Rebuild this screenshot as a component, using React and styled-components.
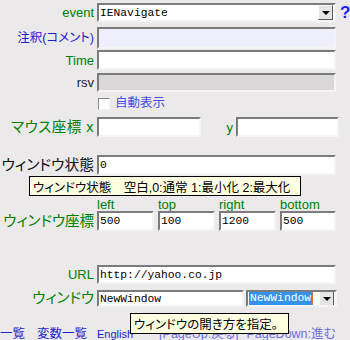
import React from "react";
import styled, { createGlobalStyle } from "styled-components";

const Global = createGlobalStyle`
  html, body { margin: 0; padding: 0; }
  body {
    background: #ebe9ea;
    font-family: "Liberation Sans", "Noto Sans CJK JP", sans-serif;
    font-feature-settings: "palt";
    width: 350px; height: 340px; overflow: hidden;
  }
`;

const Page = styled.div`
  position: relative;
  width: 350px;
  height: 340px;
  padding-top: 3px;
  box-sizing: border-box;
  overflow: hidden;
`;

const Row = styled.div`
  display: flex;
  align-items: center;
  height: ${(p) => p.$h}px;
  margin-top: ${(p) => p.$mt || 0}px;
`;

const Label = styled.div`
  width: 97px;
  flex: none;
  box-sizing: border-box;
  padding-right: 3px;
  text-align: right;
  color: ${(p) => p.$color || "#008000"};
  font-size: ${(p) => p.$size || 13}px;
  line-height: 1;
  white-space: nowrap;
  letter-spacing: ${(p) => p.$ls || 0}px;
`;

const Box = styled.div`
  box-sizing: border-box;
  width: ${(p) => p.$w}px;
  height: 100%;
  flex: none;
  border: 2px solid;
  border-color: #7b7b7b #f4f4f4 #f4f4f4 #7b7b7b;
  background: ${(p) => p.$bg || "#ffffff"};
  font-family: "Liberation Mono", "DejaVu Sans Mono", monospace;
  font-size: 11.3px;
  color: #000;
  display: flex;
  align-items: center;
  padding-left: 1px;
  white-space: nowrap;
  overflow: hidden;
`;

const Select = styled(Box)`
  justify-content: space-between;
  padding-right: 1px;
`;

const ArrowBtn = styled.div`
  box-sizing: border-box;
  width: 15px;
  height: 15px;
  background: #e6e4e4;
  border: 1px solid;
  border-color: #fafafa #5a5a5a #5a5a5a #fafafa;
  display: flex;
  align-items: center;
  justify-content: center;
  &::after {
    content: "";
    border-left: 4px solid transparent;
    border-right: 4px solid transparent;
    border-top: 4px solid #000;
  }
`;

const Help = styled.span`
  margin-left: 4px;
  color: #1a1aff;
  font-family: "Liberation Sans", sans-serif;
  font-weight: bold;
  font-size: 17px;
  line-height: 1;
`;

const CheckRow = styled.div`
  display: flex;
  align-items: center;
  margin-left: 98px;
  margin-top: ${(p) => p.$mt}px;
  height: 13px;
  gap: 5px;
`;

const Check = styled.div`
  box-sizing: border-box;
  width: 12px;
  height: 12px;
  background: #fff;
  border: 1px solid;
  border-color: #8a8a8a #f4f4f4 #f4f4f4 #8a8a8a;
`;

const CheckText = styled.span`
  color: #4a4aee;
  font-size: 12.5px;
  line-height: 1;
`;

const Small = styled.span`
  color: #008000;
  font-size: ${(p) => p.$size || 13}px;
  width: ${(p) => p.$w}px;
  text-align: ${(p) => p.$align || "left"};
  flex: none;
  line-height: 1;
  padding-right: ${(p) => p.$pr || 0}px;
  box-sizing: border-box;
`;

const CoordLabels = styled.div`
  display: flex;
  margin-left: 97px;
  margin-top: ${(p) => p.$mt}px;
  height: 12px;
  align-items: center;
  gap: 4px;
`;

const CoordBoxes = styled.div`
  display: flex;
  gap: 4px;
  height: 100%;
`;

const Tip = styled.div`
  position: absolute;
  left: ${(p) => p.$x}px;
  top: ${(p) => p.$y}px;
  width: ${(p) => p.$w}px;
  height: ${(p) => p.$h}px;
  padding: 0 3px;
  box-sizing: border-box;
  background: #ffffe1;
  border: 1px solid #000;
  font-size: 12.5px;
  color: #000;
  display: flex;
  align-items: center;
  white-space: nowrap;
  overflow: hidden;
  z-index: 2;
`;

const Highlight = styled.span`
  background: #3393ee;
  color: #fff;
  border-right: 1px solid #e0702a;
  padding: 0 1px;
  line-height: 13px;
`;

const Footer = styled.div`
  display: flex;
  align-items: center;
  margin-top: ${(p) => p.$mt}px;
  font-size: 12.5px;
  line-height: 1;
  white-space: nowrap;
`;

const Link = styled.span`
  color: ${(p) => (p.$faint ? "#6e6ede" : "#1d1dd0")};
  margin-left: ${(p) => p.$ml || 0}px;
  font-size: ${(p) => (p.$size ? `${p.$size}px` : "inherit")};
`;

export default function App() {
  return (
    <>
      <Global />
      <Page>
        <Row $h={19}>
          <Label>event</Label>
          <Select $w={239}>
            <span>IENavigate</span>
            <ArrowBtn />
          </Select>
          <Help>?</Help>
        </Row>
        <Row $h={22} $mt={5}>
          <Label $color="#1d1dd0" $size={12.5}>注釈(コメント)</Label>
          <Box $w={239} $bg="#eeeefc" />
        </Row>
        <Row $h={20} $mt={1}>
          <Label>Time</Label>
          <Box $w={239} />
        </Row>
        <Row $h={19} $mt={3}>
          <Label $color="#222">rsv</Label>
          <Box $w={239} $bg="#d9d7d8" />
        </Row>
        <CheckRow $mt={5}>
          <Check />
          <CheckText>自動表示</CheckText>
        </CheckRow>
        <Row $h={20} $mt={7}>
          <Label $size={14.5} $ls={0.5}>マウス座標 x</Label>
          <Box $w={104} />
          <Small $w={35} $align="right" $pr={3}>y</Small>
          <Box $w={103} />
        </Row>
        <Row $h={20} $mt={18}>
          <Label $color="#111" $size={14.8}>ウィンドウ状態</Label>
          <Box $w={239}>0</Box>
        </Row>
        <CoordLabels $mt={23}>
          <Small $w={57}>left</Small>
          <Small $w={57}>top</Small>
          <Small $w={57}>right</Small>
          <Small $w={57}>bottom</Small>
        </CoordLabels>
        <Row $h={20} $mt={1}>
          <Label $size={14.5}>ウィンドウ座標</Label>
          <CoordBoxes>
            <Box $w={57}>500</Box>
            <Box $w={57}>100</Box>
            <Box $w={57}>1200</Box>
            <Box $w={56}>500</Box>
          </CoordBoxes>
        </Row>
        <Row $h={19} $mt={34}>
          <Label $size={13}>URL</Label>
          <Box $w={239}>http://yahoo.co.jp</Box>
        </Row>
        <Row $h={17} $mt={6}>
          <Label $size={14.5}>ウィンドウ</Label>
          <Box $w={147}>NewWindow</Box>
          <Select $w={91} style={{ marginLeft: 2 }}>
            <Highlight>NewWindow</Highlight>
            <ArrowBtn />
          </Select>
        </Row>
        <Footer $mt={21}>
          <Link>一覧</Link>
          <Link $ml={12}>変数一覧</Link>
          <Link $ml={10} $size={11}>English</Link>
          <Link $ml={26} $faint>[PageUp:戻る]</Link>
          <Link $ml={8} $faint>PageDown:進む</Link>
        </Footer>
        <Tip $x={29} $y={176} $w={272} $h={20}>ウィンドウ状態　空白,0:通常 1:最小化 2:最大化</Tip>
        <Tip $x={130} $y={313} $w={159} $h={21}>ウィンドウの開き方を指定。</Tip>
      </Page>
    </>
  );
}
